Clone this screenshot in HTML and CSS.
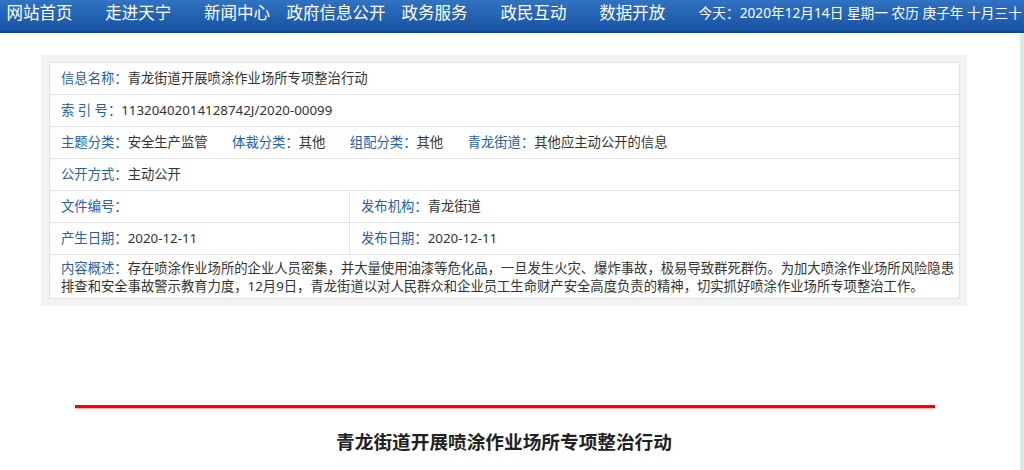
FILE: index.html
```html
<!DOCTYPE html>
<html lang="zh-CN">

<head>
    <meta charset="UTF-8">
    <meta name="viewport" content="width=device-width, initial-scale=1.0">
    <link rel="stylesheet" href="styles.css">
    <title>青龙街道开展喷涂作业场所专项整治行动</title>
</head>

<body>
    <header class="topbar">
        <ul class="nav">
            <li>网站首页</li>
            <li>走进天宁</li>
            <li>新闻中心</li>
            <li>政府信息公开</li>
            <li>政务服务</li>
            <li>政民互动</li>
            <li>数据开放</li>
        </ul>
        <div class="today">今天：2020年12月14日 星期一 农历 庚子年 十月三十</div>
    </header>

    <div class="page">
        <div class="main">
            <!-- 信息公开属性 -->
            <div class="info-box">
                <div class="info">
                    <div class="row">
                        <span class="label">信息名称：</span>青龙街道开展喷涂作业场所专项整治行动
                    </div>
                    <div class="row">
                        <span class="label">索 引 号：</span>11320402014128742J/2020-00099
                    </div>
                    <div class="row">
                        <span class="item"><span class="label">主题分类：</span>安全生产监管</span>
                        <span class="item"><span class="label">体裁分类：</span>其他</span>
                        <span class="item"><span class="label">组配分类：</span>其他</span>
                        <span class="item"><span class="label">青龙街道：</span>其他应主动公开的信息</span>
                    </div>
                    <div class="row">
                        <span class="label">公开方式：</span>主动公开
                    </div>
                    <div class="row split">
                        <div class="cell"><span class="label">文件编号：</span></div>
                        <div class="cell"><span class="label">发布机构：</span>青龙街道</div>
                    </div>
                    <div class="row split">
                        <div class="cell"><span class="label">产生日期：</span>2020-12-11</div>
                        <div class="cell"><span class="label">发布日期：</span>2020-12-11</div>
                    </div>
                    <div class="row summary">
                        <span class="label">内容概述：</span>存在喷涂作业场所的企业人员密集，并大量使用油漆等危化品，一旦发生火灾、爆炸事故，极易导致群死群伤。为加大喷涂作业场所风险隐患排查和安全事故警示教育力度，12月9日，青龙街道以对人民群众和企业员工生命财产安全高度负责的精神，切实抓好喷涂作业场所专项整治工作。
                    </div>
                </div>
            </div>

            <div class="red-line"></div>
            <h1 class="title">青龙街道开展喷涂作业场所专项整治行动</h1>
        </div>
        <div class="strip"></div>
    </div>
</body>

</html>
```

FILE: styles.css
```css
* {
    margin: 0;
    padding: 0;
    box-sizing: border-box;
}

body {
    font-family: "Noto Sans", "Noto Sans CJK SC", sans-serif;
    background: #fff;
    color: #333;
    overflow: hidden;
}

/* top bar */
.topbar {
    height: 33px;
    background: linear-gradient(to bottom, #3272c2 0%, #2462b2 50%, #1853a2 100%);
    border-bottom: 2px solid #0e4a90;
    display: flex;
    color: #fff;
    white-space: nowrap;
    overflow: hidden;
}

.nav {
    list-style: none;
    display: flex;
    margin-left: -10px;
}

.nav li {
    width: 98.8px;
    text-align: center;
    font-size: 16.5px;
    line-height: 25px;
}

.today {
    margin-left: 17px;
    font-size: 13.7px;
    line-height: 25px;
}

/* page */
.page {
    display: flex;
}

.main {
    width: 1008px;
    padding-top: 22px;
}

.strip {
    width: 4px;
    margin-left: auto;
    background: #d6eddc;
    height: 440px;
}

.info-box {
    width: 926px;
    margin: 0 auto;
    background: #f2f2f2;
    padding: 7px 7px 7px 8px;
}

.info {
    background: #fff;
    border: 1px solid #e2e2e2;
    font-size: 13.33px;
}

.row {
    height: 32px;
    line-height: 31px;
    padding-left: 11px;
    border-bottom: 1px solid #e2e2e2;
    white-space: nowrap;
}

.label {
    color: #2460ad;
}

.item {
    margin-right: 21px;
}

.row.split {
    display: flex;
    padding-left: 0;
}

.cell {
    width: 300px;
    padding-left: 11px;
    border-right: 1px solid #e2e2e2;
}

.cell + .cell {
    flex: 1;
    border-right: none;
}

.row.summary {
    height: auto;
    line-height: 18px;
    padding: 4px 1px 3px 11px;
    white-space: normal;
    border-bottom: none;
}

.red-line {
    width: 860px;
    height: 3px;
    margin: 99px 0 0 75px;
    background: #ff0000;
    box-shadow: 0 1px 1px rgba(255, 0, 0, 0.3);
}

.title {
    margin-top: 22px;
    text-align: center;
    font-size: 18.67px;
    line-height: 24px;
    font-weight: bold;
    color: #222;
}
```
